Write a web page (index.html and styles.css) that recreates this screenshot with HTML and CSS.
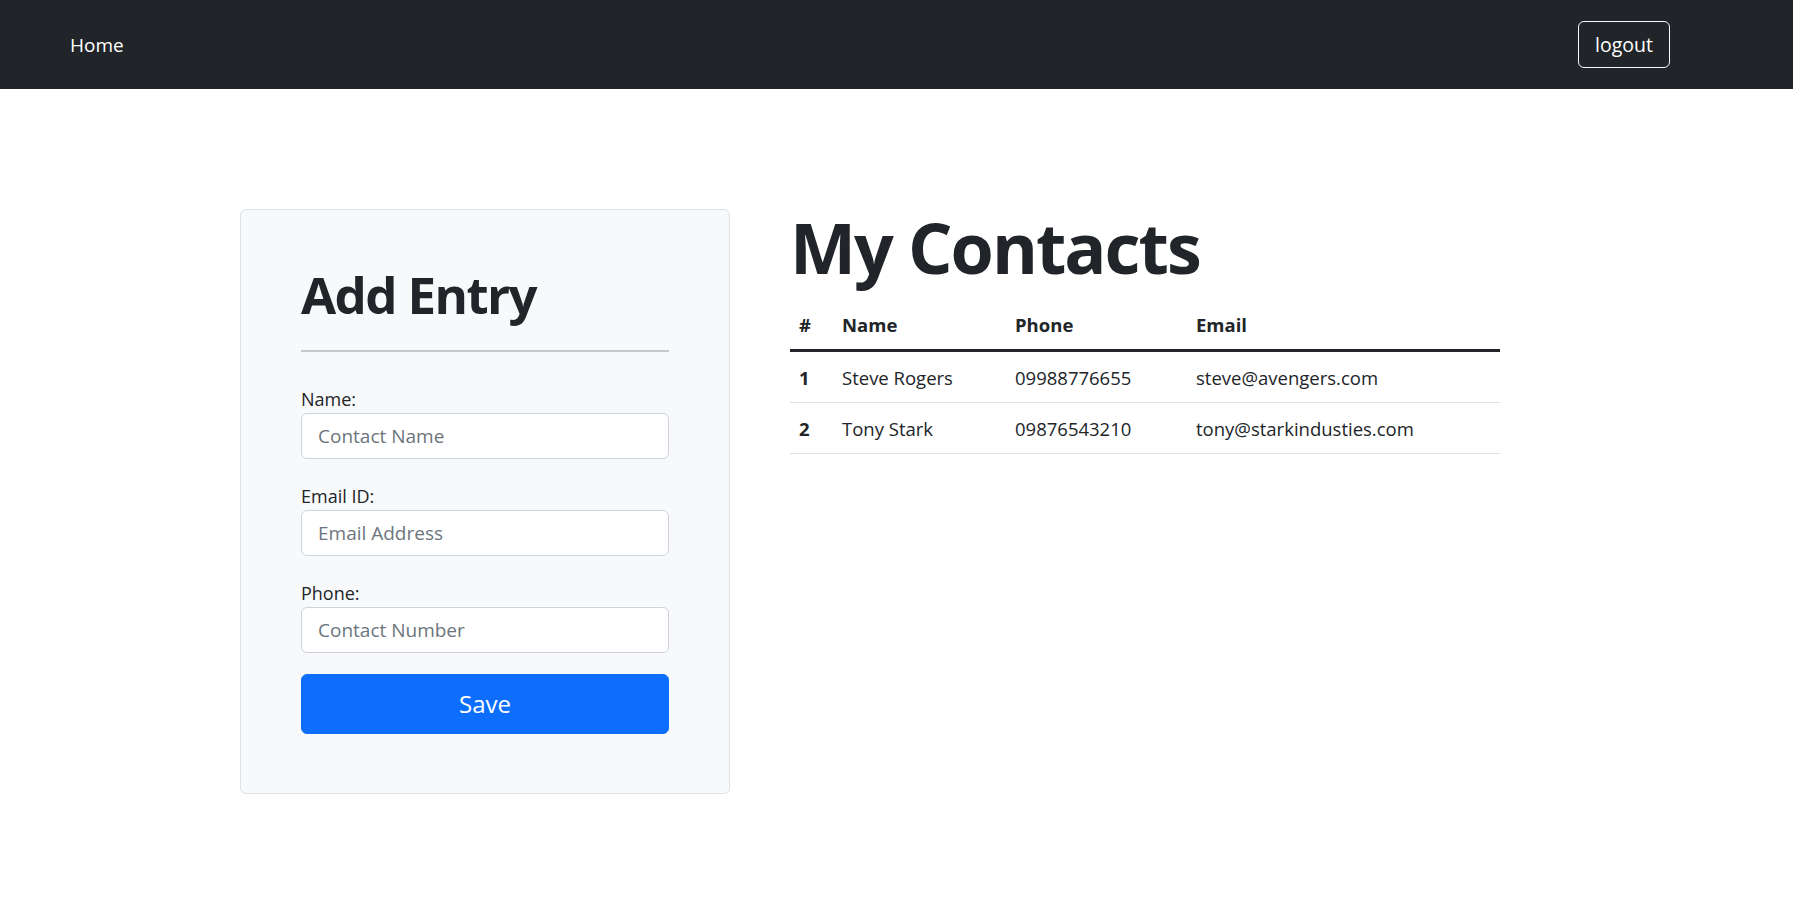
FILE: index.html
```html
<!DOCTYPE html>
<html lang="en">
<head>
<meta charset="utf-8">
<title>My Contacts</title>
<link rel="stylesheet" href="styles.css">
</head>
<body>
<nav class="navbar">
  <a class="brand" href="#">Home</a>
  <button class="btn-logout" type="button">logout</button>
</nav>
<main class="main">
  <section class="card">
    <h1 class="card-title">Add Entry</h1>
    <hr class="divider">
    <form class="form">
      <div class="group">
        <label class="label" for="name">Name:</label>
        <input class="input" id="name" type="text" placeholder="Contact Name">
      </div>
      <div class="group">
        <label class="label" for="email">Email ID:</label>
        <input class="input" id="email" type="email" placeholder="Email Address">
      </div>
      <div class="group group-last">
        <label class="label" for="phone">Phone:</label>
        <input class="input" id="phone" type="text" placeholder="Contact Number">
      </div>
      <button class="btn-save" type="button">Save</button>
    </form>
  </section>
  <section class="contacts">
    <h1 class="contacts-title">My Contacts</h1>
    <table class="table">
      <colgroup>
        <col class="c-num">
        <col class="c-name">
        <col class="c-phone">
        <col class="c-email">
      </colgroup>
      <thead>
        <tr><th>#</th><th>Name</th><th>Phone</th><th>Email</th></tr>
      </thead>
      <tbody>
        <tr><th>1</th><td>Steve Rogers</td><td>09988776655</td><td>steve@avengers.com</td></tr>
        <tr><th>2</th><td>Tony Stark</td><td>09876543210</td><td>tony@starkindusties.com</td></tr>
      </tbody>
    </table>
  </section>
</main>
</body>
</html>
```

FILE: styles.css
```css
* { box-sizing: border-box; }

body {
  margin: 0;
  font-family: "Open Sans", "Noto Sans", sans-serif;
  color: #212529;
  background: #fff;
}

.navbar {
  height: 89px;
  background: #212529;
  display: flex;
  align-items: center;
  justify-content: space-between;
  padding: 0 123px 0 70px;
}

.brand {
  color: #fff;
  text-decoration: none;
  font-size: 19px;
  line-height: 30px;
}

.btn-logout {
  height: 47px;
  padding: 0 16px;
  font-family: inherit;
  font-size: 19.5px;
  color: #fff;
  background: transparent;
  border: 1px solid #f8f9fa;
  border-radius: 6px;
}

.main {
  display: flex;
  align-items: flex-start;
  gap: 60px;
  padding: 120px 0 0 240px;
}

.card {
  width: 490px;
  flex: none;
  background: #f8f9fa;
  border: 1px solid #dee2e6;
  border-radius: 6px;
  padding: 54px 60px 59px;
}

.card-title {
  margin: 0;
  font-size: 51px;
  line-height: 1.2;
  font-weight: 700;
  letter-spacing: -1.6px;
}

.divider {
  margin: 24.5px 0 33px;
  border: 0;
  height: 2px;
  background: #c6c7c9;
}

.form {
  display: flex;
  flex-direction: column;
}

.group {
  display: flex;
  flex-direction: column;
  margin-bottom: 23px;
}

.group-last {
  margin-bottom: 21.6px;
}

.label {
  font-size: 18px;
  line-height: 28px;
}

.input {
  height: 46px;
  padding: 0 16px;
  font-family: inherit;
  font-size: 19px;
  color: #212529;
  background: #fff;
  border: 1px solid #ced4da;
  border-radius: 6px;
}

.input::placeholder {
  color: #6c757d;
}

.btn-save {
  height: 59.4px;
  font-family: inherit;
  font-size: 24px;
  color: #fff;
  background: #0d6efd;
  border: 1px solid #0d6efd;
  border-radius: 6px;
}

.contacts {
  width: 710px;
  flex: none;
}

.contacts-title {
  margin: 0 0 13.7px;
  font-size: 70px;
  line-height: 1.1;
  font-weight: 700;
  letter-spacing: -2px;
}

.table {
  width: 100%;
  border-collapse: collapse;
  table-layout: fixed;
  font-size: 18.5px;
}

.c-num { width: 43px; }
.c-name { width: 173px; }
.c-phone { width: 181px; }

.table th,
.table td {
  height: 50px;
  padding: 12px 8px 10px 9px;
  line-height: 28px;
  text-align: left;
  vertical-align: top;
  white-space: nowrap;
}

.table thead th {
  height: 49px;
  padding-top: 11px;
  font-weight: 700;
  border-bottom: 3px solid #212529;
}

.table tbody th,
.table tbody td {
  border-bottom: 1px solid #dee2e6;
}

.table tbody th {
  font-weight: 700;
}
```
